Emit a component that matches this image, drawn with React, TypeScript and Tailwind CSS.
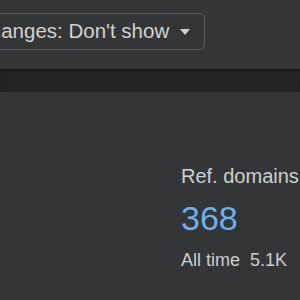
export default function App() {
  return (
    <div className="flex h-[300px] w-[300px] flex-col overflow-hidden bg-[#343537] font-['Liberation_Sans',Arial,sans-serif]">
      {/* filter bar */}
      <div className="flex h-[69px] shrink-0 items-start pt-[13px]">
        <button className="ml-[-38px] flex h-[37px] items-center rounded-[5px] border border-[#5a5b5d] pl-[12px] pr-[14px] text-[20.5px] leading-none text-[#d2d2d2]">
          <span className="whitespace-nowrap">Changes: Don't show</span>
          <svg width="10" height="6" viewBox="0 0 10 6" className="ml-[11px] mt-[1px]">
            <path d="M0 0h10L5 6z" fill="#d2d2d2" />
          </svg>
        </button>
      </div>

      {/* divider strip */}
      <div className="h-[23px] shrink-0 bg-[#232426] shadow-[inset_0_2px_2px_rgba(0,0,0,0.35)]" />

      {/* stats panel */}
      <div className="flex flex-1 flex-col pl-[181px] pt-[74px]">
        <div className="whitespace-nowrap text-[20px] leading-none text-[#d0d0d0]">Ref. domains</div>
        <div className="mt-[15px] text-[34px] leading-none text-[#6db0ec]">368</div>
        <div className="mt-[16px] flex whitespace-nowrap text-[18px] leading-none text-[#cdcdcd]">
          <span>All time</span>
          <span className="ml-[10px]">5.1K</span>
        </div>
      </div>
    </div>
  );
}
